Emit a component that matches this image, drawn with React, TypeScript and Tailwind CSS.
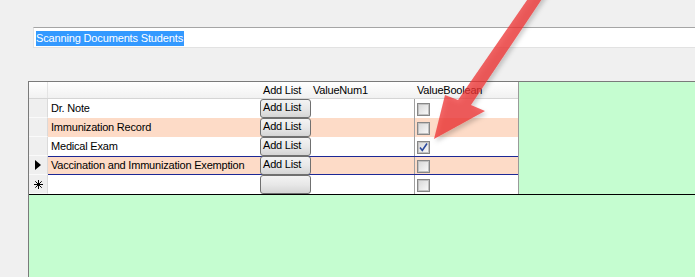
const rows = [
  { name: "Dr. Note", button: true, checked: false, peach: false, current: false, isNew: false },
  { name: "Immunization Record", button: true, checked: false, peach: true, current: false, isNew: false },
  { name: "Medical Exam", button: true, checked: true, peach: false, current: false, isNew: false },
  { name: "Vaccination and Immunization Exemption", button: true, checked: false, peach: true, current: true, isNew: false },
  { name: "", button: false, checked: false, peach: false, current: false, isNew: true },
];

function CheckBox({ checked }: { checked: boolean }) {
  return (
    <div className="w-[13px] h-[13px] border border-[#878787] bg-gradient-to-br from-[#d6d6d6] to-[#fbfbfb] p-0">
      <div className="w-full h-full border border-[#c2c2c2] relative">
        {checked ? (
          <svg className="absolute left-[-1px] top-[-1px]" width="11" height="11" viewBox="0 0 11 11">
            <path d="M2 5.5 L4.3 8.5 L9 1.5" fill="none" stroke="#2c4a9e" strokeWidth="1.6" />
          </svg>
        ) : null}
      </div>
    </div>
  );
}

function RowHeader({ current, isNew }: { current: boolean; isNew: boolean }) {
  return (
    <div className="w-[19px] h-full shrink-0 bg-[#efefef] border-r border-b border-r-[#dadada] border-b-[#fafafa] flex items-center justify-center">
      {current ? (
        <svg width="6" height="10" viewBox="0 0 6 10">
          <path d="M0 0 L6 5 L0 10 Z" fill="#000" />
        </svg>
      ) : null}
      {isNew ? (
        <svg width="9" height="9" viewBox="0 0 9 9">
          <path d="M4.5 0 V9 M0 4.5 H9 M1.3 1.3 L7.7 7.7 M7.7 1.3 L1.3 7.7" stroke="#000" strokeWidth="1" />
        </svg>
      ) : null}
    </div>
  );
}

export default function App() {
  return (
    <div
      className="relative w-[695px] h-[277px] overflow-hidden bg-[#f0f0f0] flex flex-col text-[11px] tracking-[-0.2px] text-black"
      style={{ fontFamily: '"Liberation Sans", Arial, sans-serif' }}
    >
      <div className="mt-[27px] ml-[33px] h-[21px] bg-white border-t border-t-[#a5a5a5] border-l border-b border-l-[#e2e2e2] border-b-[#e2e2e2] pl-[2px] pt-[2px]">
        <span className="inline-block bg-[#3399ff] text-white leading-[15px] pr-[1px] tracking-[-0.15px]">Scanning Documents Students</span>
      </div>

      <div className="mt-[33px] ml-[28px] flex-1 bg-[#c5fdd0] border-t border-l border-[#7a7a7a]">
        <div className="border-b border-black">
          <div className="w-[490px] bg-white border-r border-[#9a9a9a]">
            <div className="flex h-[17px] bg-gradient-to-b from-white to-[#f1f1f1] border-b border-[#d5d5d5]">
              <div className="w-[19px] shrink-0 border-r border-[#e4e4e4]" />
              <div className="w-[212px] shrink-0" />
              <div className="w-[51px] shrink-0 pl-[3px] leading-[16px]">Add List</div>
              <div className="w-[103px] shrink-0 pl-[2px] leading-[16px]">ValueNum1</div>
              <div className="flex-1 pl-[3px] leading-[16px]">ValueBoolean</div>
            </div>
            {rows.map((row, i) => (
              <div key={i} className="flex h-[19px]">
                <RowHeader current={row.current} isNew={row.isNew} />
                <div
                  className={
                    "flex flex-1 " +
                    (row.peach ? "bg-[#fddbc7] " : "bg-white ") +
                    (row.current ? "border-y border-[#1c2896]" : "")
                  }
                >
                  <div className="w-[212px] shrink-0 pl-[3px] flex items-center">{row.name}</div>
                  <div className={"w-[51px] shrink-0 " + (row.current ? "-my-px" : "")}>
                    <div className="h-full border border-[#707070] rounded-[3px] bg-gradient-to-b from-[#f3f3f3] via-[#e8e8e8] to-[#d5d5d5] pl-[2px] leading-[15px]">
                      {row.button ? "Add List" : ""}
                    </div>
                  </div>
                  <div className="w-[103px] shrink-0" />
                  <div className="flex-1 border-l border-[#a0a0a0] pl-[2px] flex items-center pt-[1px]">
                    <CheckBox checked={row.checked} />
                  </div>
                </div>
              </div>
            ))}
          </div>
        </div>
      </div>

      <svg className="absolute left-0 top-0 pointer-events-none" width="695" height="277" viewBox="0 0 695 277">
        <defs>
          <filter id="shadow" x="-20%" y="-20%" width="140%" height="140%">
            <feDropShadow dx="2" dy="3" stdDeviation="2" floodColor="#000" floodOpacity="0.25" />
          </filter>
        </defs>
        <polygon
          points="434,139 485,111 471,105 548,-10 534,-10 458,100 445,95"
          fill="#ee3232"
          fillOpacity="0.75"
          filter="url(#shadow)"
        />
      </svg>
    </div>
  );
}
